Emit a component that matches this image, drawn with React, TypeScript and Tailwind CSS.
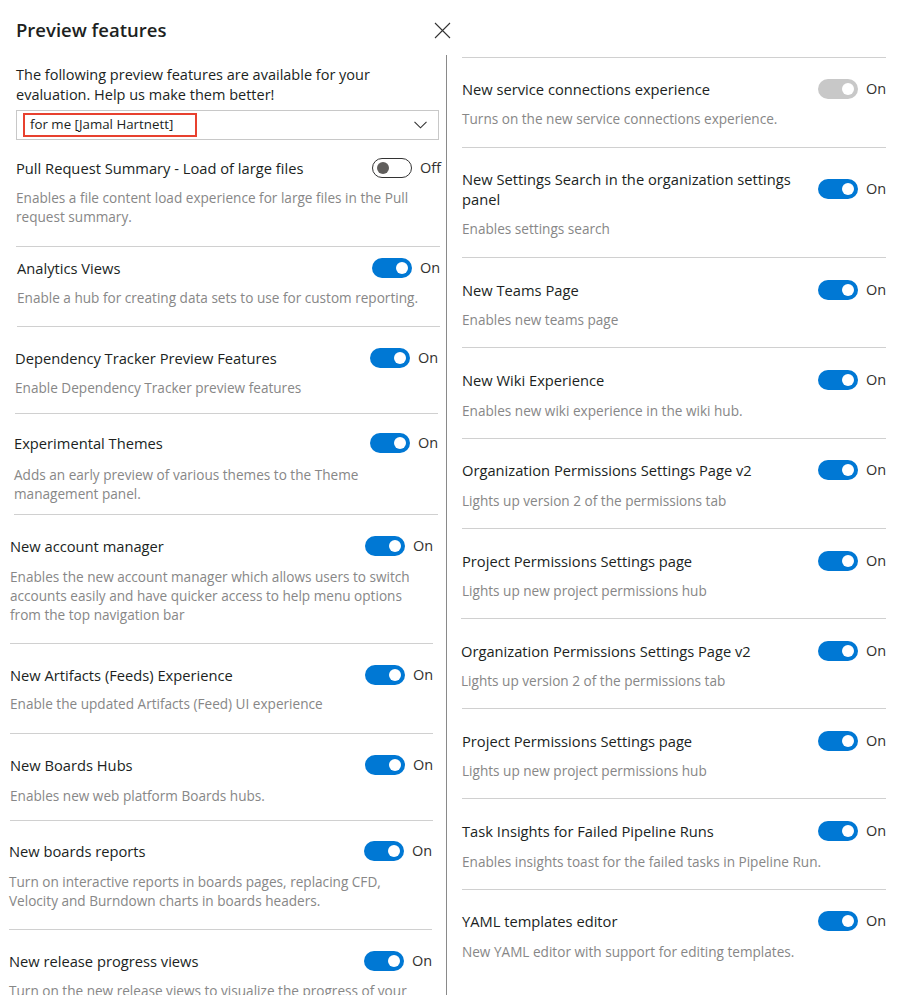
type Row = {
  title: string
  desc: string
  on?: boolean
  disabled?: boolean
  wrap: string
  pad: string
  gap: string
}

const leftRows: Row[] = [
  {
    title: 'Pull Request Summary - Load of large files',
    desc: 'Enables a file content load experience for large files in the Pull request summary.',
    on: false,
    wrap: 'ml-[16px] w-[424px] border-b',
    pad: 'pt-[18px] pb-[20px]',
    gap: 'mt-[10px]',
  },
  {
    title: 'Analytics Views',
    desc: 'Enable a hub for creating data sets to use for custom reporting.',
    on: true,
    wrap: 'ml-[17px] w-[423px] border-b',
    pad: 'pt-[11px] pb-[19px]',
    gap: 'mt-[10px]',
  },
  {
    title: 'Dependency Tracker Preview Features',
    desc: 'Enable Dependency Tracker preview features',
    on: true,
    wrap: 'ml-[15px] w-[423px] border-b',
    pad: 'pt-[21px] pb-[16px]',
    gap: 'mt-[10px]',
  },
  {
    title: 'Experimental Themes',
    desc: 'Adds an early preview of various themes to the Theme management panel.',
    on: true,
    wrap: 'ml-[14px] w-[424px] border-b',
    pad: 'pt-[19px] pb-[11px]',
    gap: 'mt-[12px]',
  },
  {
    title: 'New account manager',
    desc: 'Enables the new account manager which allows users to switch accounts easily and have quicker access to help menu options from the top navigation bar',
    on: true,
    wrap: 'ml-[10px] w-[423px] border-b',
    pad: 'pt-[21px] pb-[19px]',
    gap: 'mt-[11px]',
  },
  {
    title: 'New Artifacts (Feeds) Experience',
    desc: 'Enable the updated Artifacts (Feed) UI experience',
    on: true,
    wrap: 'ml-[10px] w-[423px] border-b',
    pad: 'pt-[21px] pb-[20px]',
    gap: 'mt-[9px]',
  },
  {
    title: 'New Boards Hubs',
    desc: 'Enables new web platform Boards hubs.',
    on: true,
    wrap: 'ml-[10px] w-[423px] border-b',
    pad: 'pt-[21px] pb-[15px]',
    gap: 'mt-[11px]',
  },
  {
    title: 'New boards reports',
    desc: 'Turn on interactive reports in boards pages, replacing CFD, Velocity and Burndown charts in boards headers.',
    on: true,
    wrap: 'ml-[9px] w-[423px] border-b',
    pad: 'pt-[20px] pb-[19px]',
    gap: 'mt-[11px]',
  },
  {
    title: 'New release progress views',
    desc: 'Turn on the new release views to visualize the progress of your releases in the pipeline.',
    on: true,
    wrap: 'ml-[9px] w-[423px]',
    pad: 'pt-[21px] pb-[20px]',
    gap: 'mt-[10px]',
  },
]

const rightRows: Row[] = [
  {
    title: 'New service connections experience',
    desc: 'Turns on the new service connections experience.',
    on: true,
    disabled: true,
    wrap: 'ml-[15px] w-[424px] border-t',
    pad: 'pt-[21px] pb-[19px]',
    gap: 'mt-[10px]',
  },
  {
    title: 'New Settings Search in the organization settings panel',
    desc: 'Enables settings search',
    on: true,
    wrap: 'ml-[15px] w-[424px] border-t',
    pad: 'pt-[21px] pb-[19px]',
    gap: 'mt-[10px]',
  },
  {
    title: 'New Teams Page',
    desc: 'Enables new teams page',
    on: true,
    wrap: 'ml-[15px] w-[424px] border-t',
    pad: 'pt-[22px] pb-[18px]',
    gap: 'mt-[10px]',
  },
  {
    title: 'New Wiki Experience',
    desc: 'Enables new wiki experience in the wiki hub.',
    on: true,
    wrap: 'ml-[15px] w-[424px] border-t',
    pad: 'pt-[22px] pb-[18px]',
    gap: 'mt-[11px]',
  },
  {
    title: 'Organization Permissions Settings Page v2',
    desc: 'Lights up version 2 of the permissions tab',
    on: true,
    wrap: 'ml-[15px] w-[424px] border-t',
    pad: 'pt-[21px] pb-[18px]',
    gap: 'mt-[11px]',
  },
  {
    title: 'Project Permissions Settings page',
    desc: 'Lights up new project permissions hub',
    on: true,
    wrap: 'ml-[15px] w-[424px] border-t',
    pad: 'pt-[22px] pb-[18px]',
    gap: 'mt-[10px]',
  },
  {
    title: 'Organization Permissions Settings Page v2',
    desc: 'Lights up version 2 of the permissions tab',
    on: true,
    wrap: 'ml-[14px] w-[425px] border-t',
    pad: 'pt-[22px] pb-[18px]',
    gap: 'mt-[10px]',
  },
  {
    title: 'Project Permissions Settings page',
    desc: 'Lights up new project permissions hub',
    on: true,
    wrap: 'ml-[15px] w-[424px] border-t',
    pad: 'pt-[22px] pb-[18px]',
    gap: 'mt-[10px]',
  },
  {
    title: 'Task Insights for Failed Pipeline Runs',
    desc: 'Enables insights toast for the failed tasks in Pipeline Run.',
    on: true,
    wrap: 'ml-[15px] w-[424px] border-t',
    pad: 'pt-[22px] pb-[18px]',
    gap: 'mt-[11px]',
  },
  {
    title: 'YAML templates editor',
    desc: 'New YAML editor with support for editing templates.',
    on: true,
    wrap: 'ml-[15px] w-[424px] border-t',
    pad: 'pt-[21px] pb-[18px]',
    gap: 'mt-[11px]',
  },
]

function Toggle({ on, disabled }: { on?: boolean; disabled?: boolean }) {
  if (disabled) {
    return (
      <span className="flex h-[20px] w-[40px] items-center justify-end rounded-full bg-[#c8c8c8] pr-[4px]">
        <span className="h-[12px] w-[12px] rounded-full bg-white" />
      </span>
    )
  }
  if (on) {
    return (
      <span className="flex h-[20px] w-[40px] items-center justify-end rounded-full bg-[#0078d4] pr-[4px]">
        <span className="h-[12px] w-[12px] rounded-full bg-white" />
      </span>
    )
  }
  return (
    <span className="flex h-[20px] w-[40px] items-center justify-start rounded-full border border-[#333] pl-[4px]">
      <span className="h-[12px] w-[12px] rounded-full bg-[#605e5c]" />
    </span>
  )
}

function FeatureRow({ row }: { row: Row }) {
  return (
    <div className={`${row.wrap} border-[#d0d0d0]`}>
      <div className={row.pad}>
        <div className="flex items-center justify-between">
          <div className="max-w-[340px] text-[14.7px] leading-[20px] text-[#201f1e]">{row.title}</div>
          <div className="flex items-center gap-[8px]">
            <Toggle on={row.on} disabled={row.disabled} />
            <span className="w-[20px] text-[14.5px] leading-[20px] text-[#323130]">{row.on ? 'On' : 'Off'}</span>
          </div>
        </div>
        <p className={`${row.gap} text-[13.6px] leading-[19px] text-[#878787]`}>{row.desc}</p>
      </div>
    </div>
  )
}

export default function App() {
  return (
    <div
      className="h-[995px] w-[900px] overflow-hidden bg-white"
      style={{ fontFamily: '"Open Sans", "Noto Sans", sans-serif' }}
    >
      <div className="flex">
        <div className="w-[446px] shrink-0">
          <div className="flex w-[452px] items-center justify-between pl-[16px] pt-[16px]">
            <h1 className="text-[18.5px] font-semibold leading-[28px] text-[#201f1e]">Preview features</h1>
            <svg width="17" height="17" viewBox="0 0 17 17" className="mr-[1px]">
              <path d="M1 1 L16 16 M16 1 L1 16" stroke="#333" strokeWidth="1.1" fill="none" />
            </svg>
          </div>
          <p className="ml-[16px] mt-[21px] w-[410px] text-[14.5px] leading-[20px] text-[#201f1e]">
            The following preview features are available for your evaluation. Help us make them better!
          </p>
          <div className="ml-[16px] mt-[5px] flex h-[30px] w-[423px] items-center justify-between border border-[#c8c8c8] pl-[6px] pr-[11px]">
            <div className="flex h-[24px] w-[174px] items-center border-2 border-[#e8412f] pl-[5px] text-[13.3px] text-[#201f1e]">
              for me [Jamal Hartnett]
            </div>
            <svg width="13" height="8" viewBox="0 0 13 8">
              <path d="M0.5 0.8 L6.5 6.8 L12.5 0.8" stroke="#333" strokeWidth="1.1" fill="none" />
            </svg>
          </div>
          {leftRows.map((row, i) => (
            <FeatureRow key={i} row={row} />
          ))}
        </div>
        <div className="mt-[55px] h-[940px] flex-1 border-l border-[#8a8a8a] pt-[2px]">
          {rightRows.map((row, i) => (
            <FeatureRow key={i} row={row} />
          ))}
        </div>
      </div>
    </div>
  )
}
